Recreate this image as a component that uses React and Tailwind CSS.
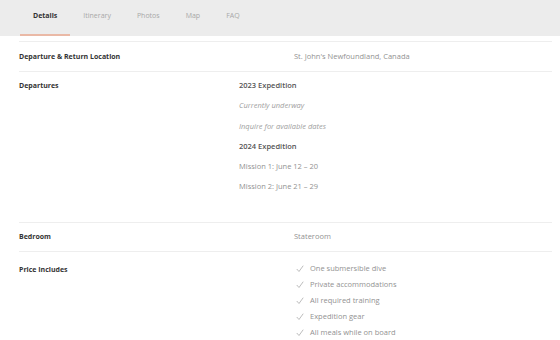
import React from "react";

const F = { fontFamily: '"Open Sans", "DejaVu Sans", sans-serif' };

function Check() {
  return (
    <svg width="8" height="8" viewBox="0 0 8 8" className="shrink-0">
      <path d="M1 4.3 L3 6.5 L7 1" fill="none" stroke="#b5b5b5" strokeWidth="0.9" strokeLinecap="round" strokeLinejoin="round" />
    </svg>
  );
}

export default function App() {
  const tabs = ["Details", "Itinerary", "Photos", "Map", "FAQ"];
  const items = [
    "One submersible dive",
    "Private accommodations",
    "All required training",
    "Expedition gear",
    "All meals while on board",
  ];
  return (
    <div className="w-[560px] h-[340px] overflow-hidden bg-white" style={F}>
      <div className="h-[36px] bg-[#ececec] flex items-stretch pl-[20px]">
        {tabs.map((t, i) => (
          <div
            key={t}
            className={`flex items-center justify-center px-[13px] text-[7px] ${
              i === 0
                ? "font-bold text-[#333] border-b-[2px] border-[#eab9a6]"
                : "text-[#a8a8a8]"
            }`}
          >
            <span className={i === 0 ? "pb-[1px]" : "pb-[3px]"}>{t}</span>
          </div>
        ))}
      </div>
      <div className="ml-[19px] w-[533px] mt-[5px] border-t border-[#eeeeee]">
        <div className="flex h-[30px] items-center border-b border-[#eeeeee]">
          <div className="w-[275px] mt-[1px] text-[7px] font-bold text-[#333]">Departure &amp; Return Location</div>
          <div className="text-[7.5px] text-[#929292]">St. John's Newfoundland, Canada</div>
        </div>
        <div className="flex h-[151px] border-b border-[#eeeeee] pt-[8px]">
          <div className="w-[220px] mt-[1px] text-[7px] font-bold text-[#333]">Departures</div>
          <div className="flex flex-col text-[7.5px] leading-[10px] gap-[10.3px]">
            <div className="font-semibold text-[#555]">2023 Expedition</div>
            <div className="italic text-[#a0a0a0]">Currently underway</div>
            <div className="italic text-[#a0a0a0]">Inquire for available dates</div>
            <div className="font-semibold text-[#555]">2024 Expedition</div>
            <div className="text-[#929292]">Mission 1: June 12 – 20</div>
            <div className="text-[#929292]">Mission 2: June 21 – 29</div>
          </div>
        </div>
        <div className="flex h-[29px] items-center border-b border-[#eeeeee]">
          <div className="w-[275px] mt-[1px] text-[7px] font-bold text-[#333]">Bedroom</div>
          <div className="text-[7.5px] text-[#929292]">Stateroom</div>
        </div>
        <div className="flex pt-[12px]">
          <div className="w-[277px] mt-[1px] text-[7px] font-bold text-[#333]">Price Includes</div>
          <div className="flex flex-col gap-[6px]">
            {items.map((it) => (
              <div key={it} className="flex items-center gap-[6px] h-[10px] text-[7.5px] text-[#929292]">
                <Check />
                <span>{it}</span>
              </div>
            ))}
          </div>
        </div>
      </div>
    </div>
  );
}
